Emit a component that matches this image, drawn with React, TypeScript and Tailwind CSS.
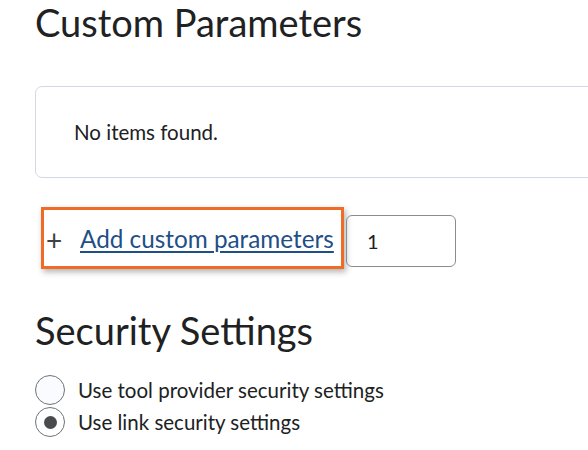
export default function App() {
  return (
    <div className="w-[588px] h-[450px] overflow-hidden bg-white text-[#202122] font-['Lato',sans-serif]">
      <div className="pl-[35px]">
        <h1 className="text-[38px] leading-[44px] font-normal">Custom Parameters</h1>
        <div className="mt-[42px] w-[600px] h-[92px] border border-[#d3d9e3] rounded-[7px] flex items-center pl-[38px]">
          <span className="text-[20.5px] leading-none">No items found.</span>
        </div>
        <div className="mt-[29px] flex items-start">
          <div className="ml-[6px] w-[303px] h-[62px] border-[3px] border-[#f06b25] shadow-[2px_3px_6px_rgba(0,0,0,0.3)] flex items-center pl-[2px] pt-[3px]">
            <span className="text-[28px] leading-none text-[#3f4244] w-[34px] font-normal">+</span>
            <a href="#" className="text-[24.3px] leading-none text-[#1e4f87] underline underline-offset-[3px] decoration-[1.5px]">Add custom parameters</a>
          </div>
          <div className="ml-[2px] mt-[8px] w-[110px] h-[52px] border border-[#8a8d90] rounded-[6px] flex items-center pl-[20px] text-[20px]">1</div>
        </div>
        <h2 className="mt-[38px] text-[38px] leading-[46px] font-normal">Security Settings</h2>
        <div className="mt-[22px] flex flex-col gap-[2px]">
          <label className="flex items-center gap-[13px]">
            <span className="w-[30px] h-[30px] rounded-full border border-[#6e7376] bg-[#f9fbff]" />
            <span className="text-[20.5px] leading-none">Use tool provider security settings</span>
          </label>
          <label className="flex items-center gap-[13px]">
            <span className="w-[30px] h-[30px] rounded-full border border-[#6e7376] bg-white flex items-center justify-center">
              <span className="w-[13px] h-[13px] rounded-full bg-[#494c4e]" />
            </span>
            <span className="text-[20.5px] leading-none">Use link security settings</span>
          </label>
        </div>
      </div>
    </div>
  );
}
